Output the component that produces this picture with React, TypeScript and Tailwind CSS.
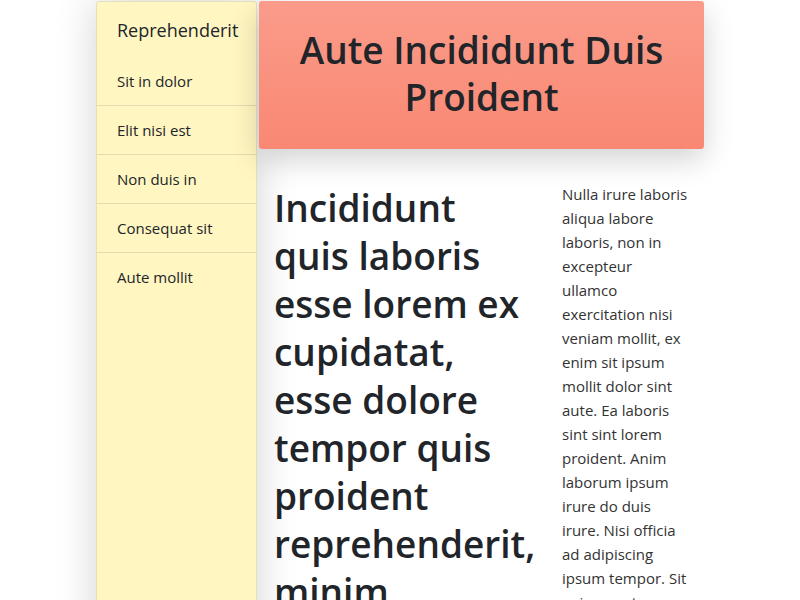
const menu = ['Sit in dolor', 'Elit nisi est', 'Non duis in', 'Consequat sit', 'Aute mollit'];

export default function App() {
  return (
    <div
      className="h-[600px] bg-white text-[#212529] overflow-hidden"
      style={{ fontFamily: '"Segoe UI", "Open Sans", "Noto Sans", sans-serif' }}
    >
      <div className="w-[608px] mx-auto flex gap-[2px] pt-px">
        <nav className="w-[161px] shrink-0 min-h-[620px] bg-[#fff6c1] border border-[#e6e0b8] rounded-t-[3px] shadow-[0_0_40px_rgba(0,0,0,0.18)]">
          <div className="px-5 pt-[15px] pb-[14px] text-[18px] leading-[26px]">Reprehenderit</div>
          <ul>
            {menu.map((item, i) => (
              <li
                key={i}
                className={`px-5 h-[49px] flex items-center text-[15px] ${i < menu.length - 1 ? 'border-b border-[#e3dcaf]' : ''}`}
              >
                {item}
              </li>
            ))}
          </ul>
        </nav>

        <main className="flex-1 min-w-0">
          <header className="h-[148px] rounded-[3px] bg-gradient-to-b from-[#fa9b8a] to-[#f98873] shadow-[0_10px_30px_rgba(0,0,0,0.18)] flex items-center justify-center px-6 pb-[5px]">
            <h1 className="text-center text-[37px] leading-[47px] font-semibold">Aute Incididunt Duis Proident</h1>
          </header>

          <div className="flex pt-[35px]">
            <h2 className="w-[288px] shrink-0 pl-[15px] pr-2 text-[37px] leading-[48px] font-semibold">
              Incididunt quis laboris esse lorem ex cupidatat, esse dolore tempor quis proident reprehenderit, minim
              exercitation sit nostrud.
            </h2>
            <p className="w-[141px] pl-[15px] -mt-[2px] text-[15px] leading-[24px] text-[#333]">
              Nulla irure laboris aliqua labore laboris, non in excepteur ullamco exercitation nisi veniam mollit, ex
              enim sit ipsum mollit dolor sint aute. Ea laboris sint sint lorem proident. Anim laborum ipsum irure do
              duis irure. Nisi officia ad adipiscing ipsum tempor. Sit enim amet nostrud.
            </p>
          </div>
        </main>
      </div>
    </div>
  );
}
